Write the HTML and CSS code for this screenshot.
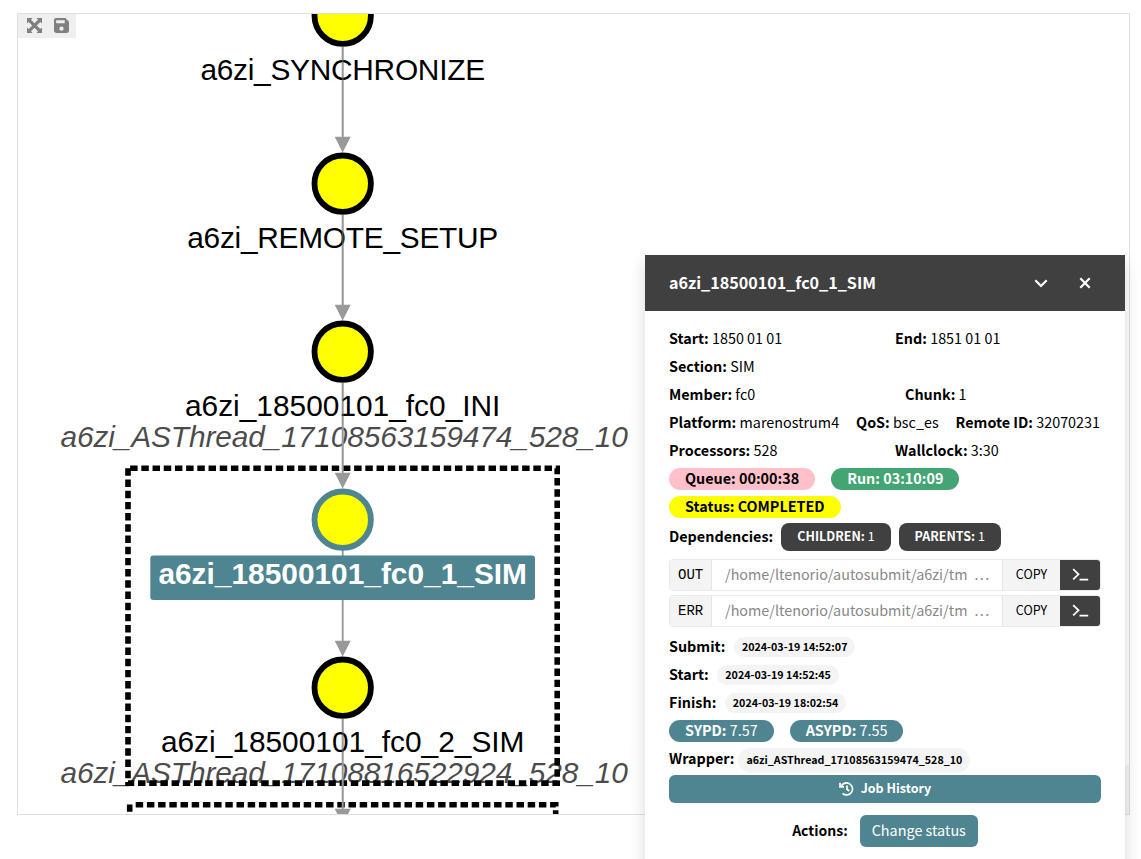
FILE: index.html
```html
<!DOCTYPE html>
<html lang="en">
<head>
<meta charset="utf-8">
<title>Experiment graph</title>
<link rel="stylesheet" href="styles.css">
</head>
<body>
<main class="graph">
  <svg class="canvas" viewBox="18 14 1111 800" width="1111" height="800">
    <g class="wrapper-label">
      <text x="344.1" y="447">a6zi_ASThread_17108563159474_528_10</text>
      <text x="344.1" y="783">a6zi_ASThread_17108816522924_528_10</text>
    </g>
    <g class="wrapper-box">
      <path d="M128 468.3V783.1H557.2V468.3Z"/>
      <path d="M129.7 804.4V830"/>
      <path d="M135.7 804.7H555.7V830"/>
    </g>
    <g class="edge">
      <path d="M342.7 46V138M342.7 214V306M342.7 382V474M342.7 550V642M342.7 718V810"/>
      <path class="arrow" d="M334.7 136.7h16l-8 15.8zM334.7 304.7h16l-8 15.8zM334.7 472.7h16l-8 15.8zM334.7 640.7h16l-8 15.8zM334.7 808.7h16l-8 15.8z"/>
    </g>
    <g class="node">
      <circle cx="342.7" cy="15.700" r="28.200"/>
      <circle cx="342.7" cy="183.700" r="28.200"/>
      <circle cx="342.7" cy="351.700" r="28.200"/>
      <circle class="selected" cx="342.7" cy="519.700" r="28.200"/>
      <circle cx="342.7" cy="687.700" r="28.200"/>
    </g>
    <rect class="label-box" x="150.3" y="555.4" width="384.7" height="44.6" rx="3"/>
    <g class="node-label">
      <text class="caps" x="342.6" y="80">a6zi_SYNCHRONIZE</text>
      <text class="caps" x="342.6" y="248">a6zi_REMOTE_SETUP</text>
      <text x="342.7" y="416">a6zi_18500101_fc0_INI</text>
      <text class="active" x="342.7" y="584">a6zi_18500101_fc0_1_SIM</text>
      <text x="342.7" y="752">a6zi_18500101_fc0_2_SIM</text>
    </g>
    <path class="edge" d="M342.7 214V306M342.7 382V472M342.7 46V136M342.7 718V808" opacity=".45"/>
  </svg>
  <div class="toolbar">
    <svg width="15" height="15" viewBox="0 0 15 15"><path d="M0 0h5.600L4 1.700 7.500 5.200 11 1.700 9.400 0H15v5.600L13.300 4 9.800 7.500l3.500 3.500L15 9.400V15H9.400L11 13.300 7.500 9.800 4 13.300 5.600 15H0V9.400L1.700 11l3.500-3.500L1.700 4 0 5.600z"/></svg>
    <svg width="15" height="15" viewBox="0 0 14 14"><path fill-rule="evenodd" d="M2 0h8.600L14 3.400V12a2 2 0 0 1-2 2H2a2 2 0 0 1-2-2V2a2 2 0 0 1 2-2zm0 2v3h8V2zM7 8a2 2 0 1 0 0 4 2 2 0 0 0 0-4z"/></svg>
  </div>
  <div class="corner"></div>
</main>

<aside class="panel">
  <header class="panel-head">
    <h1>a6zi_18500101_fc0_1_SIM</h1>
    <svg width="14" height="9" viewBox="0 0 14 9"><path d="M1.300 1.300 7 7l5.700-5.700"/></svg>
    <svg width="12" height="12" viewBox="0 0 12 12"><path d="M1.300 1.300 10.700 10.700M10.700 1.300 1.300 10.700"/></svg>
  </header>
  <div class="panel-body">
    <div class="row pair"><span><b>Start:</b> 1850 01 01</span><span><b>End:</b> 1851 01 01</span></div>
    <div class="row"><span><b>Section:</b> SIM</span></div>
    <div class="row pair"><span><b>Member:</b> fc0</span><span class="chunk"><b>Chunk:</b> 1</span></div>
    <div class="row spread"><span><b>Platform:</b> marenostrum4</span><span><b>QoS:</b> bsc_es</span><span><b>Remote ID:</b> 32070231</span></div>
    <div class="row pair"><span><b>Processors:</b> 528</span><span><b>Wallclock:</b> 3:30</span></div>
    <div class="row pills"><b class="pill queue">Queue: 00:00:38</b><b class="pill run">Run: 03:10:09</b></div>
    <div class="row pills"><b class="pill status">Status: COMPLETED</b></div>
    <div class="row deps"><b>Dependencies:</b><span class="dark"><b>CHILDREN:</b> 1</span><span class="dark"><b>PARENTS:</b> 1</span></div>
    <div class="path"><code>OUT</code><span class="file">/home/ltenorio/autosubmit/a6zi/tm&nbsp; …</span><span class="copy">COPY</span><span class="term"><svg width="17" height="13" viewBox="0 0 17 13"><path d="M1.200 1.200 6.500 6.300 1.200 11.400M7.500 11.700h8.700"/></svg></span></div>
    <div class="path"><code>ERR</code><span class="file">/home/ltenorio/autosubmit/a6zi/tm&nbsp; …</span><span class="copy">COPY</span><span class="term"><svg width="17" height="13" viewBox="0 0 17 13"><path d="M1.200 1.200 6.500 6.300 1.200 11.400M7.500 11.700h8.700"/></svg></span></div>
    <div class="row times"><b>Submit:</b><b class="stamp">2024-03-19 14:52:07</b></div>
    <div class="row times"><b>Start:</b><b class="stamp">2024-03-19 14:52:45</b></div>
    <div class="row times"><b>Finish:</b><b class="stamp">2024-03-19 18:02:54</b></div>
    <div class="row pills"><span class="pill teal"><b>SYPD:</b> 7.57</span><span class="pill teal"><b>ASYPD:</b> 7.55</span></div>
    <div class="row wrap"><b>Wrapper:</b><b class="stamp tall">a6zi_ASThread_17108563159474_528_10</b></div>
    <div class="history"><svg width="15" height="14" viewBox="0 0 15 14"><path d="M2.200 4.200A6 6 0 1 1 3.600 11.500M1 .800v4h4M8 3.500v3.800l2.300 1.700"/></svg><span>Job History</span></div>
    <div class="actions"><b>Actions:</b><span class="change">Change status</span></div>
  </div>
</aside>
</body>
</html>
```
FILE: styles.css
```css
* { box-sizing: border-box; }
body {
  margin: 0;
  height: 859px;
  padding: 13px 11px 0 17px;
  overflow: hidden;
  position: relative;
  background: #fff;
  color: #000;
  font-family: "Noto Sans CJK SC", "Noto Sans", sans-serif;
  font-size: 14.36px;
  line-height: 20px;
}
.graph { position: relative; height: 802px; border: 1px solid #dfdfdf; overflow: hidden; }
.canvas { display: block; }
.wrapper-label, .node-label { font-family: "Liberation Sans", Arial, sans-serif; font-size: 29.87px; text-anchor: middle; }
.wrapper-label { font-style: italic; letter-spacing: -.11px; opacity: .7; }
.caps { letter-spacing: -.27px; }
.active { font-weight: 700; fill: #fff; }
.wrapper-box { fill: none; stroke: #000; stroke-width: 5.6; stroke-dasharray: 7.467 3.733; }
.edge { fill: none; stroke: #999; stroke-width: 1.87; }
.arrow { fill: #999; stroke: none; }
.node { fill: #ff0; stroke: #000; stroke-width: 5.8; }
.selected { stroke: #4f8590; }
.label-box { fill: #4f8590; }
.toolbar { position: absolute; top: 0; left: 0; width: 58px; height: 24px; padding: 0 7px 2px 9px; display: flex; align-items: center; justify-content: space-between; background: #efefef; }
.toolbar svg { fill: #808080; }
.corner { position: absolute; right: 0; bottom: 0; width: 120px; height: 49px; background: #f4f4f4; }

.panel { position: absolute; left: 645px; top: 255px; width: 480px; height: 640px; background: #fff; box-shadow: 0 8px 16px rgba(0, 0, 0, .15); }
.panel-head { height: 56px; padding: 0 34px 0 24px; display: flex; align-items: center; background: #404040; color: #fff; }
.panel-head h1 { margin: 0 0 2px; flex: 1; font-size: 16.1px; line-height: 24px; }
.panel-head svg { fill: none; stroke: #fff; stroke-width: 2.2; }
.panel-head svg + svg { margin-left: 31px; }
.panel-body { padding: 14px 24px 0; }
.row { height: 28px; padding-bottom: 2px; display: flex; align-items: center; white-space: nowrap; }
.pair { display: grid; grid-template-columns: 226px 1fr; }
.chunk { padding-left: 10px; }
.spread { justify-content: space-between; padding-right: 1px; }
.pills { gap: 16px; padding: 0; }
.pill { height: 22px; line-height: 20px; padding: 0 16px; border-radius: 11px; }
.queue { background: #ffc0cb; }
.run { background: #44a574; color: #fff; }
.status { background: #ff0; }
.teal { background: #4f8590; color: #fff; }
.deps { height: 32px; gap: 8px; padding: 0; }
.deps > b { padding-bottom: 2px; }
.dark { height: 28px; line-height: 26px; padding: 0 16px; border-radius: 8px; background: #404040; color: #fff; font-size: 12.5px; }
.path { height: 32px; margin-top: 4px; display: flex; border: 1px solid #e9e9ee; border-radius: 4px; overflow: hidden; line-height: 28px; white-space: nowrap; }
.path + .path { margin-bottom: 6px; }
.deps + .path { margin-top: 6px; }
.path code { width: 42px; padding-left: 8px; background: #f4f4f4; border-right: 1px solid #e4e4e8; font-family: "Liberation Mono", monospace; font-size: 14px; line-height: 30px; }
.file { width: 290px; padding-left: 13px; color: #888; }
.copy { width: 58px; background: #f4f4f4; border-left: 1px solid #e4e4ee; text-align: center; font-size: 12.5px; line-height: 27px; }
.term { flex: 1; background: #404040; display: flex; align-items: center; justify-content: center; padding-bottom: 1px; }
.term svg { fill: none; stroke: #fff; stroke-width: 1.8; }
.stamp { height: 20px; line-height: 19px; padding: 0 8px; border-radius: 13px; background: #f4f4f4; font-size: 10.7px; }
.times { gap: 8.500px; padding: 0; }
.times > b:first-child, .wrap > b:first-child { padding-bottom: 2px; }
.wrap { gap: 4px; padding: 0; }
.tall { height: 25px; line-height: 24px; margin-top: 3px; }
.history { height: 28px; margin-top: 2px; display: flex; align-items: center; justify-content: center; gap: 7px; border-radius: 6px; background: #4f8590; color: #fff; font-weight: 600; font-size: 12.5px; }
.history span { padding-bottom: 2px; }
.history svg { fill: none; stroke: #fff; stroke-width: 1.7; margin-bottom: 1px; }
.actions { margin-top: 12px; height: 32px; display: flex; align-items: center; justify-content: center; gap: 12px; }
.actions b { font-size: 14px; padding-bottom: 2px; }
.change { height: 32px; line-height: 29px; padding: 0 12px; border-radius: 6px; background: #4f8590; color: #fff; font-size: 14.4px; }
```
